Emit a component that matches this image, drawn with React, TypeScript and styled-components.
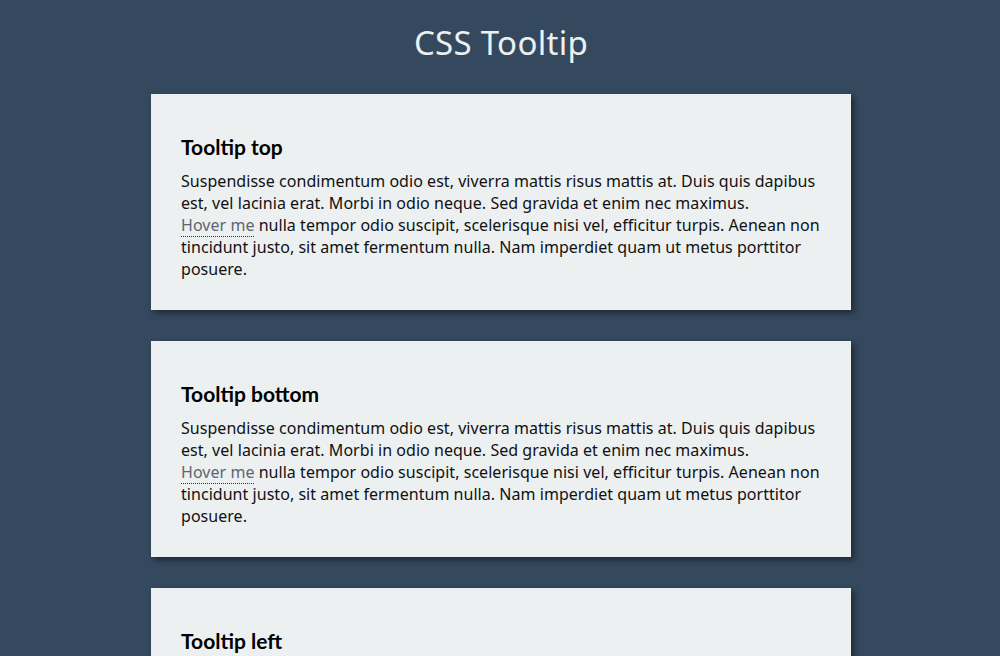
import React from "react";
import styled, { createGlobalStyle } from "styled-components";

const Global = createGlobalStyle`
  html, body { margin: 0; padding: 0; }
  body {
    background: #34495e;
    font-family: "Noto Sans", "Open Sans", sans-serif;
    color: #111;
  }
`;

const Page = styled.div`
  padding: 21px 0 40px 2px;
`;

const Title = styled.h1`
  margin: 0 0 29px;
  text-align: center;
  color: #ecf0f1;
  font-family: "Noto Sans", sans-serif;
  font-weight: 400;
  font-size: 33px;
  line-height: 44px;
  letter-spacing: 0.3px;
`;

const Card = styled.section`
  width: 640px;
  margin: 0 auto 31px;
  padding: 40px 30px 30px;
  background: #ecf0f1;
  box-shadow: 3px 3px 6px rgba(0, 0, 0, 0.45);
`;

const Heading = styled.h2`
  margin: 0 0 10px;
  font-family: "Lato", sans-serif;
  font-weight: 700;
  font-size: 21px;
  line-height: 26px;
  color: #000;
`;

const Text = styled.p`
  margin: 0;
  font-size: 16px;
  line-height: 22px;
  letter-spacing: 0.04px;
  color: #111;
`;

const Hover = styled.span`
  color: #5d6670;
  border-bottom: 1px dotted #333;
  cursor: help;
`;

const sections = ["Tooltip top", "Tooltip bottom", "Tooltip left", "Tooltip right"];

export default function App() {
  return (
    <Page>
      <Global />
      <Title>CSS Tooltip</Title>
      {sections.map((s) => (
        <Card key={s}>
          <Heading>{s}</Heading>
          <Text>
            Suspendisse condimentum odio est, viverra mattis risus mattis at. Duis quis dapibus est, vel lacinia erat. Morbi in odio neque. Sed gravida et enim nec maximus.
            <br />
            <Hover>Hover me</Hover> nulla tempor odio suscipit, scelerisque nisi vel, efficitur turpis. Aenean non tincidunt justo, sit amet fermentum nulla. Nam imperdiet quam ut metus porttitor posuere.
          </Text>
        </Card>
      ))}
    </Page>
  );
}
